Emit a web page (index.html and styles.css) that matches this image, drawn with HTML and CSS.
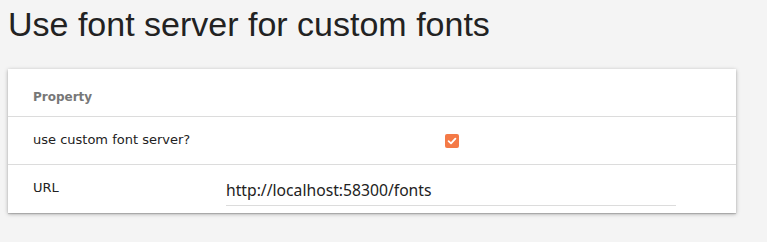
FILE: index.html
```html
<!DOCTYPE html>
<html>
<head>
<meta charset="utf-8">
<link rel="stylesheet" href="styles.css">
</head>
<body>
<div class="page">
  <h1 class="title">Use font server for custom fonts</h1>
  <div class="card">
    <div class="row head">
      <div class="label">Property</div>
      <div class="value"></div>
    </div>
    <div class="row">
      <div class="label">use custom font server?</div>
      <div class="value center">
        <span class="check">
          <svg width="14" height="14" viewBox="0 0 14 14"><rect x="0" y="0" width="14" height="14" rx="2" fill="#f47a47"/><path d="M3.6 7.2 L6 9.4 L10.4 4.6" fill="none" stroke="#fff" stroke-width="1.8" stroke-linecap="round" stroke-linejoin="round"/></svg>
        </span>
      </div>
    </div>
    <div class="row last">
      <div class="label">URL</div>
      <div class="value">
        <div class="input">http://localhost:58300/fonts</div>
      </div>
    </div>
  </div>
</div>
</body>
</html>
```
FILE: styles.css
```css
html, body {
  margin: 0;
  padding: 0;
  background: #f4f4f4;
}
.page {
  padding: 0 31px 29px 8px;
}
.title {
  font-family: "Liberation Sans", Arial, sans-serif;
  font-size: 34px;
  font-weight: normal;
  color: #222;
  margin: 5px 0 25px 0;
  line-height: 39px;
}
.card {
  background: #fff;
  width: 728px;
  height: 144px;
  box-shadow: 0 1px 4px rgba(0,0,0,0.3), 0 1px 1px rgba(0,0,0,0.15);
  font-family: "DejaVu Sans", Verdana, sans-serif;
  font-size: 13px;
  color: #222;
}
.row {
  display: grid;
  grid-template-columns: 218px 450px 60px;
  height: 47px;
  align-items: center;
  border-bottom: 1px solid #dcdcdc;
}
.row.last {
  border-bottom: none;
}
.label {
  padding-left: 25px;
  margin-top: -2px;
}
.head .label {
  font-weight: bold;
  color: #777;
  font-size: 12px;
  margin-top: 8px;
}
.value.center {
  display: flex;
  justify-content: center;
}
.check {
  display: block;
  width: 14px;
  height: 14px;
  margin-left: 1px;
}
.check svg {
  display: block;
}
.input {
  font-family: "Noto Sans", "Open Sans", sans-serif;
  font-size: 15.7px;
  color: #222;
  border-bottom: 1px solid #dcdcdc;
  height: 28px;
  line-height: 27px;
  margin-top: 5px;
}
```
